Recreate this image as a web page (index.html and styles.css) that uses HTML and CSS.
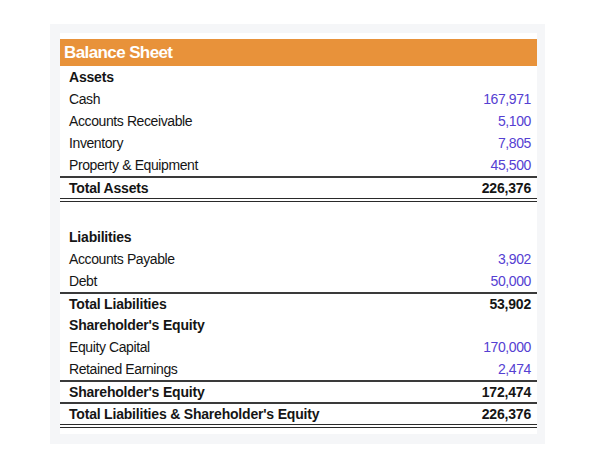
FILE: index.html
```html
<!DOCTYPE html>
<html>
<head>
<meta charset="utf-8">
<link rel="stylesheet" href="styles.css">
</head>
<body>
<div class="panel">
  <div class="sheet">
    <div class="title">Balance Sheet</div>
    <div class="row head"><span>Assets</span></div>
    <div class="row"><span>Cash</span><span class="num">167,971</span></div>
    <div class="row"><span>Accounts Receivable</span><span class="num">5,100</span></div>
    <div class="row"><span>Inventory</span><span class="num">7,805</span></div>
    <div class="row"><span>Property &amp; Equipment</span><span class="num">45,500</span></div>
    <div class="row head total double"><span>Total Assets</span><span>226,376</span></div>
    <div class="row blank"></div>
    <div class="row head"><span>Liabilities</span></div>
    <div class="row"><span>Accounts Payable</span><span class="num">3,902</span></div>
    <div class="row"><span>Debt</span><span class="num">50,000</span></div>
    <div class="row head total"><span>Total Liabilities</span><span>53,902</span></div>
    <div class="row head"><span>Shareholder's Equity</span></div>
    <div class="row"><span>Equity Capital</span><span class="num">170,000</span></div>
    <div class="row"><span>Retained Earnings</span><span class="num">2,474</span></div>
    <div class="row head total"><span>Shareholder's Equity</span><span>172,474</span></div>
    <div class="row head total double"><span>Total Liabilities &amp; Shareholder's Equity</span><span>226,376</span></div>
  </div>
</div>
</body>
</html>
```

FILE: styles.css
```css
html, body {
  margin: 0;
  padding: 0;
  background: #ffffff;
}
body {
  font-family: "Liberation Sans", Arial, sans-serif;
  color: #151515;
}
.panel {
  margin: 24px 0 0 50px;
  width: 495px;
  height: 420px;
  box-sizing: border-box;
  background: #f5f6f8;
  padding: 9px 8px 0 10px;
}
.sheet {
  background: #ffffff;
  padding-top: 6px;
  padding-bottom: 6px;
}
.title {
  background: #e8923a;
  color: #ffffff;
  font-weight: bold;
  font-size: 17px;
  letter-spacing: -0.6px;
  height: 27px;
  line-height: 28px;
  padding-left: 4px;
}
.row {
  display: flex;
  justify-content: space-between;
  align-items: center;
  height: 22px;
  padding: 0 6px 0 9px;
  font-size: 14px;
  letter-spacing: -0.4px;
}
.blank {
  height: 24px;
}
.head {
  font-weight: bold;
  font-size: 14px;
  letter-spacing: -0.2px;
}
.num {
  color: #5540d2;
}
.total {
  border-top: 2px solid #3a3a3a;
  height: 20px;
}
.double {
  border-bottom: 4px double #2a2a2a;
}
```
